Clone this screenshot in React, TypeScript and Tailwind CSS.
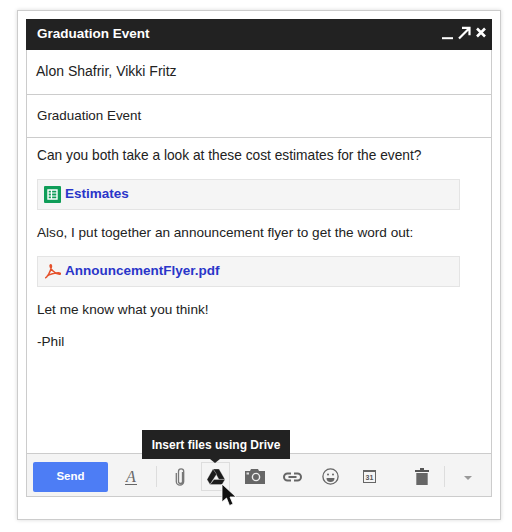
function SheetsIcon() {
  return (
    <svg width="17" height="17" viewBox="0 0 17 17" className="shrink-0">
      <rect width="17" height="17" rx="1" fill="#0f9d58" />
      <path d="M4 4h9v9H4z" fill="none" stroke="#fff" strokeWidth="1.4" />
      <path d="M4 7h9M4 10h9M7.5 4v9" stroke="#fff" strokeWidth="1.2" />
    </svg>
  );
}

function PdfIcon() {
  return (
    <svg width="17" height="17" viewBox="0 0 17 17" fill="none" className="shrink-0">
      <path
        d="M1.2 15.2C3.5 14 6.5 8.5 7.4 3.8 7.7 1.8 6.4 1 6.1 2.6c-.3 2 3.4 8 9.4 8.6 1.2.1 1.2-1.2 0-1.3-4-.3-10.5 1.4-12.6 3.4"
        stroke="#e5512b"
        strokeWidth="1.5"
      />
    </svg>
  );
}

function WindowControls() {
  return (
    <svg width="46" height="14" viewBox="0 0 46 14" fill="none" stroke="#fff" className="mb-[4px]">
      <path d="M0 12.2h11" strokeWidth="2" />
      <path d="M17 12.5L26.5 3M20 1.8h7.5v7.5" strokeWidth="2.2" />
      <path d="M35 2.5l8 8M43 2.5l-8 8" strokeWidth="2.6" />
    </svg>
  );
}

function PaperclipIcon() {
  return (
    <svg width="11" height="18" viewBox="0 0 11 18" fill="none" stroke="#777" strokeWidth="1.3" className="shrink-0">
      <path d="M7.5 4v9.5a2 2 0 0 1-4 0V3.4a2.6 2.6 0 0 1 5.2 0v10a3.7 3.7 0 0 1-7.4 0V5" />
    </svg>
  );
}

function DriveIcon() {
  return (
    <svg width="18" height="16" viewBox="0 0 18 16" fill="#1c1c1c" stroke="#f4f4f4" strokeWidth="0.3">
      <path d="M6 0h6l6 10.4h-6z" />
      <path d="M6 0L0 10.4l3 5.2 6.6-10.4z" />
      <path d="M3 15.6h12l3-5.2H7z" />
    </svg>
  );
}

function CameraIcon() {
  return (
    <svg width="20" height="15" viewBox="0 0 20 15" className="shrink-0">
      <path d="M0 2h5l1-2h7l1 2h6v15H0z" fill="#666" />
      <rect x="1.5" y="3.5" width="2.5" height="2" fill="#ddd" />
      <circle cx="11" cy="8" r="3.6" fill="none" stroke="#eee" strokeWidth="1.4" />
    </svg>
  );
}

function LinkIcon() {
  return (
    <svg width="19" height="10" viewBox="0 0 19 10" fill="none" stroke="#666" strokeWidth="2" className="shrink-0">
      <path d="M8 1.5H4.5a3.5 3.5 0 0 0 0 7H8M11 1.5h3.5a3.5 3.5 0 0 1 0 7H11M5.5 5h8" />
    </svg>
  );
}

function SmileIcon() {
  return (
    <svg width="17" height="17" viewBox="0 0 17 17" fill="none" stroke="#666" strokeWidth="1.3" className="shrink-0">
      <circle cx="8.5" cy="8.5" r="7.6" />
      <circle cx="6" cy="6.5" r="1" fill="#666" stroke="none" />
      <circle cx="11" cy="6.5" r="1" fill="#666" stroke="none" />
      <path d="M4.5 10h8a4 4 0 0 1-8 0z" fill="#666" stroke="none" />
    </svg>
  );
}

function CalendarIcon() {
  return (
    <div className="flex h-[13px] w-[13px] shrink-0 items-center justify-center border border-t-[2px] border-[#666] text-[7px] font-bold leading-none text-[#555]">
      31
    </div>
  );
}

function TrashIcon() {
  return (
    <svg width="14" height="17" viewBox="0 0 14 17" className="shrink-0">
      <path d="M0 2h5V0h4v2h5v2H0z" fill="#555" />
      <path d="M1.3 5h11.4v12H1.3z" fill="#666" />
    </svg>
  );
}

function Attachment({ icon, name }: { icon: React.ReactNode; name: string }) {
  return (
    <div className="flex h-[31px] w-[423px] items-center gap-[4px] border border-[#e4e4e4] bg-[#f5f5f5] pl-[6px] text-[13.5px] font-bold text-[#2a35c9]">
      {icon}
      <span>{name}</span>
    </div>
  );
}

export default function App() {
  return (
    <div className="h-[532px] w-[512px] bg-white pl-[17px] pt-[10px] font-['Liberation_Sans',Arial,sans-serif] text-[13.6px] text-[#222]">
      <div className="h-[510px] w-[484px] border border-[#ccc] p-[8px] shadow-[0_0_4px_rgba(0,0,0,0.15)]">
        <div className="relative flex h-[478px] w-[466px] flex-col border border-t-0 border-[#ccc]">
          {/* Title bar */}
          <div className="-mx-px flex h-[31px] shrink-0 items-center justify-between bg-[#222] pl-[11px] pr-[4px] text-white">
            <span className="text-[13.5px] font-bold">Graduation Event</span>
            <WindowControls />
          </div>

          <div className="flex h-[45px] shrink-0 items-center border-b border-[#ccc] pb-[2px] pl-[9px] text-[14px]">Alon Shafrir, Vikki Fritz</div>
          <div className="flex h-[43px] shrink-0 items-center border-b border-[#ccc] pl-[10px] text-[13.4px]">Graduation Event</div>

          {/* Message body */}
          <div className="flex flex-1 flex-col pl-[10px] pt-[9px]">
            <p className="text-[13.75px] leading-[17px]">Can you both take a look at these cost estimates for the event?</p>
            <div className="mt-[15px]">
              <Attachment icon={<SheetsIcon />} name="Estimates" />
            </div>
            <p className="mt-[14px] leading-[17px]">Also, I put together an announcement flyer to get the word out:</p>
            <div className="mt-[15px]">
              <Attachment icon={<PdfIcon />} name="AnnouncementFlyer.pdf" />
            </div>
            <p className="mt-[14px] leading-[17px]">Let me know what you think!</p>
            <p className="mt-[15px] leading-[17px]">-Phil</p>
          </div>

          {/* Toolbar */}
          <div className="flex h-[43px] shrink-0 items-center border-t border-[#ccc] bg-[#f4f4f4] pl-[6px] pt-[3px]">
            <button className="h-[30px] w-[75px] rounded-[2px] bg-[#4d7df5] text-[11.5px] font-bold text-white">Send</button>
            <span className="ml-[17px] w-[12px] border-b border-[#666] text-center font-['Liberation_Serif',serif] text-[16px] italic leading-[15px] text-[#666]">A</span>
            <div className="ml-[19px] h-[21px] w-px bg-[#ddd]" />
            <div className="ml-[18px]"><PaperclipIcon /></div>
            <div className="ml-[15px] flex h-[29px] w-[29px] shrink-0 items-center justify-center border border-[#ddd]">
              <DriveIcon />
            </div>
            <div className="ml-[15px]"><CameraIcon /></div>
            <div className="ml-[18px]"><LinkIcon /></div>
            <div className="ml-[20px]"><SmileIcon /></div>
            <div className="ml-[24px]"><CalendarIcon /></div>
            <div className="ml-[39px]"><TrashIcon /></div>
            <div className="ml-[15px] h-[21px] w-px bg-[#ddd]" />
            <div className="ml-[19px] mt-[3px] h-0 w-0 border-x-[4px] border-t-[4px] border-x-transparent border-t-[#999]" />
          </div>

          {/* Tooltip and pointer */}
          <div className="absolute left-[115px] top-[411px] flex h-[29px] w-[148px] items-center justify-center bg-[#222] text-[12px] font-bold text-white">
            Insert files using Drive
            <div className="absolute left-[68px] top-[29px] h-0 w-0 border-x-[5px] border-t-[4px] border-x-transparent border-t-[#222]" />
          </div>
          <svg width="16" height="24" viewBox="0 0 16 24" className="absolute left-[194px] top-[465px]">
            <path d="M1 0v18l4.5-4 3 7.5 3.5-1.5-3-7h6z" fill="#111" stroke="#fff" strokeWidth="0.8" />
          </svg>
        </div>
      </div>
    </div>
  );
}
